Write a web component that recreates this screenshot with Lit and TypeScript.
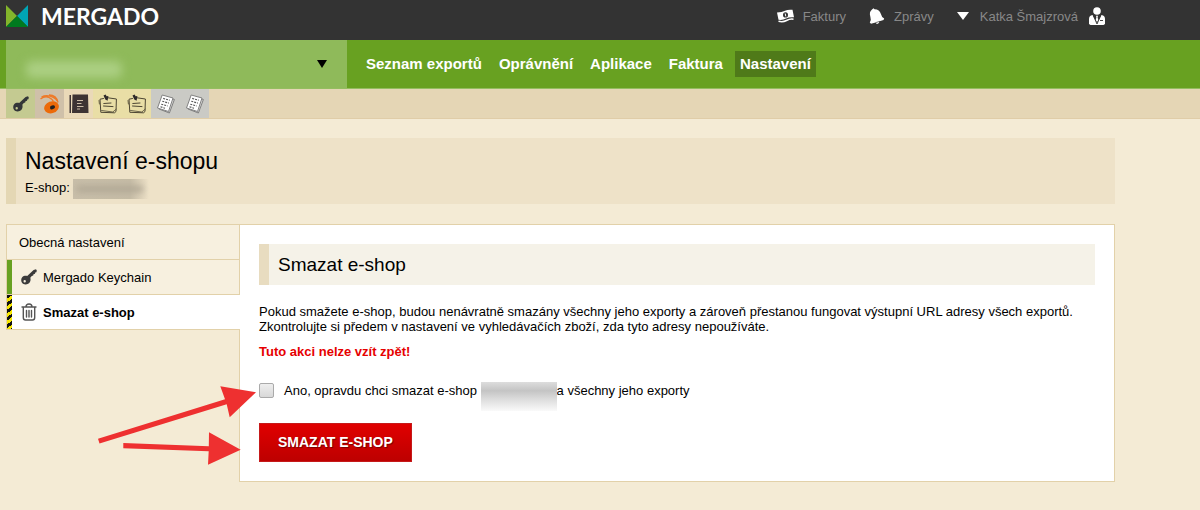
import { LitElement, html, css } from "lit";
import { customElement } from "lit/decorators.js";

const keyIcon = (color: string) => html`<svg class="icon" viewBox="0 0 16 16" width="16" height="16" aria-hidden="true">
  <path fill=${color} fill-rule="evenodd" d="M1.2 8.200C2.500 6.800 4.600 6.500 6.200 7L12.600 1 15 .3 15.800 1.400 15.400 3.200 14.200 3.500 14 4.800 12.500 5.200 12.200 6.600 10.800 7 9.300 8.800C10 11 9.300 13.400 7.200 14.700 5 16 2.200 15.600 1 13.800-.2 12 0 9.600 1.200 8.200zM2.500 12.300a1.200 1.200 0 1 0 2.400 0a1.200 1.200 0 1 0-2.400 0z"/>
</svg>`;

const noteIcon = html`<svg class="icon" viewBox="0 0 20 20" width="20" height="20" aria-hidden="true">
  <g fill="none" stroke="#4d4633" stroke-width="1" stroke-linecap="round" stroke-linejoin="round">
    <path d="M5.500 4.500 2 5.200 2.800 18.300 16.500 18.800 18 17.500 18.400 5 10 3.800"/>
    <path d="M3.600 16.500 14.800 18 18.200 15.200M1 6.500 1.400 10" stroke-width=".8"/>
    <path d="M5.800 9.500 13 9M5.500 12 15 12.600"/>
  </g>
  <path fill="#2e2a2a" d="M5.500 1.500 7.600.6 8.600 2.200 10.400 2 9.600 6.800 7.300 5.600z"/>
</svg>`;

const sheetsIcon = html`<svg class="icon" viewBox="0 0 20 20" width="20" height="20" aria-hidden="true">
  <path fill="#d9d9d7" stroke="#777" stroke-width=".9" d="M8 2.500 18.400 5.500 13.400 19 3 15z"/>
  <path fill="#fff" stroke="#777" stroke-width=".9" d="M6.200 1 17 4 12.500 17.500 1.500 14z"/>
  <path fill="none" stroke="#555" stroke-width="1.100" stroke-dasharray="2 1" d="M7.200 4.400 13.800 6.300M6.300 7.300 12.800 9.100M5.300 10.200 11.600 12M4.500 12.800 9 14.200"/>
</svg>`;

@customElement("app-root")
export class AppRoot extends LitElement {
  static styles = css`
    :host {
      display: block;
      min-height: 100vh;
      background: #f4ebd5;
      color: #000;
      font: 13px/15px "Liberation Sans", Arial, sans-serif;
    }
    * { box-sizing: border-box; }
    h1, h2, p { margin: 0; font-weight: normal; }
    a { color: inherit; text-decoration: none; }
    .icon { display: block; flex: none; }
    .wrap { max-width: 1115px; padding-left: 6px; display: flex; }

    .top { background: #333; }
    .top .wrap { height: 40px; justify-content: space-between; padding-bottom: 8px; align-items: center; }
    .brand { display: flex; align-items: center; gap: 13px; color: #fff; font: 700 23px/24px Lato, sans-serif; }
    .account { display: flex; align-items: center; gap: 23px; padding-right: 10px; color: #888; }
    .account a { display: flex; align-items: center; gap: 9px; }
    .account .user { gap: 11px; }

    .green { background: #68a121; border-bottom: 1px solid #94bd60; }
    .shop { position: relative; flex: 0 1 341px; background: #8fba5a; }
    .shop select { appearance: none; width: 100%; height: 48px; border: 0; padding: 0 40px 0 20px; background: transparent; font: inherit; display: block; }
    .shop svg { position: absolute; right: 20px; top: 20px; pointer-events: none; }
    .shop .smudge { position: absolute; left: 20px; top: 21px; width: 96px; height: 17px; border-radius: 6px; background: #abcf82; filter: blur(5px); pointer-events: none; }
    nav { display: flex; align-items: center; gap: 7px; padding-left: 14px; color: #fff; font: bold 15px/18px "Liberation Sans", Arial, sans-serif; }
    nav a { padding: 4px 5px; }
    nav .on { background: #4f7a19; }

    .tools { background: #e5d6b5; border-bottom: 1px solid #e0cda8; }
    .tools a { width: 29px; height: 29px; display: flex; align-items: center; justify-content: center; }
    .c-key { background: #c4ca91; }
    .c-bug { background: #cfc0a9; }
    .c-book { background: #ead9b8; }
    .c-note { background: #e9dea6; }
    .c-sheet { background: #cacac5; }

    main { max-width: 1115px; padding: 19px 0 27px 6px; position: relative; }
    .title { background: #eee2c8; border-left: 10px solid #e4d7b4; padding: 9px; margin-bottom: 20px; }
    h1 { font-size: 23px; line-height: 28px; }
    .title p { display: flex; gap: 3px; padding-top: 5px; }
    .hidden-name { position: relative; display: inline-block; width: 76px; height: 15px; vertical-align: top; }
    .hidden-name::before { content: ""; position: absolute; inset: -1px 0 -13px; background: linear-gradient(#ddd, #c4c4c4 30%, #ddd 60%, #fafafa); }
    .title .hidden-name::before { inset: -1px 0 -4px; background: linear-gradient(90deg, #c8bea9, #c5bba5 75%, #eee2c8); }
    .title .hidden-name::after { content: ""; position: absolute; left: 4px; top: 6px; width: 66px; height: 6px; background: #b0a794; filter: blur(3px); }

    .cols { display: flex; align-items: flex-start; }
    .side { flex: 0 0 233px; border: solid #e2d1a9; border-width: 1px 0 0 1px; position: relative; z-index: 1; }
    .side a { display: flex; align-items: center; gap: 6px; height: 35px; padding-left: 12px; background: #f7f0df; border-bottom: 1px solid #e2d1a9; }
    .side .key, .side .bin { padding-left: 0; }
    .side .key::before, .side .bin::before { content: ""; align-self: stretch; width: 5px; margin-right: 3px; background: #68a121; }
    .side .bin { background: #fff; font-weight: bold; margin-right: -1px; }
    .side .bin::before { background: repeating-linear-gradient(145deg, #111 0 3px, #f5e600 3px 6px); }
    .panel { flex: 1; min-width: 0; background: #fff; border: 1px solid #e2d1a9; padding: 19px; }
    h2 { background: #f5f2e8; border-left: 10px solid #e8dcc0; padding: 9px; font-size: 19px; line-height: 23px; margin-bottom: 19px; }
    .warn { color: #e60000; font-weight: bold; padding: 10px 0 24px; }
    .confirm { display: flex; align-items: center; gap: 10px; margin-bottom: 25px; }
    .confirm input { appearance: none; flex: none; width: 15px; height: 15px; margin: 0; border: 1px solid #aaa; border-radius: 2px; background: linear-gradient(#eee, #d8d8d8); }
    .delete { display: block; border: 1px solid #c51a1a; padding: 10px 18px; color: #fff; background: linear-gradient(#e00000, #bd0000); font: bold 14px/17px "Liberation Sans", Arial, sans-serif; text-shadow: 1px 1px 1px #700; }
    .arrows { position: absolute; left: 90px; top: 261px; z-index: 2; pointer-events: none; }
  `;

  render() {
    return html`
      <header class="top">
        <div class="wrap">
          <a class="brand" href="#">
            <svg class="icon" viewBox="0 0 22 22" width="22" height="22" aria-hidden="true">
              <path fill="#83b52b" d="M0 0 11 11 0 22z"/><path fill="#00a5b5" d="M22 0 11 11 22 22z"/><path fill="#007a1f" d="M11 11 22 22H0z"/>
            </svg>
            MERGADO
          </a>
          <div class="account">
            <a href="#">
              <svg class="icon" viewBox="0 0 17 14" width="17" height="14" aria-hidden="true">
                <path fill="#fff" d="M0 3.500Q5 3.400 8 1.800T15.500.8L17 8.200Q12 7.800 9 9.600T1.500 10.800z"/>
                <path fill="none" stroke="#fff" stroke-width="1.500" d="M1.500 12.300Q6 13.400 9.500 11.500T16.500 10.200"/>
                <ellipse cx="8.500" cy="5.900" rx="2.500" ry="2.700" fill="#333"/><path stroke="#fff" d="M8.200 4.500 8.800 7.400"/>
              </svg>
              Faktury
            </a>
            <a href="#">
              <svg class="icon" viewBox="0 0 16 17" width="16" height="17" aria-hidden="true">
                <path fill="#fff" d="M3 1.500 4.500.2 5.500 1.200C9 1.200 11 3 11.900 6Q12.500 9 15.200 10.500L14.500 12 10.500 13.300Q10.300 16 8.200 16 7 15.800 6.600 14.500L2 15.800.8 14.600Q2.500 12 1.400 9C.4 5.500.8 3.300 3 1.500z"/>
                <path stroke="#333" stroke-width=".7" d="M6.500 14.700 11 13.300"/>
              </svg>
              Zprávy
            </a>
            <a class="user" href="#">
              <svg class="icon" viewBox="0 0 12 8" width="12" height="8" aria-hidden="true"><path fill="#fff" d="M0 0H12L6 8z"/></svg>
              Katka Šmajzrová
              <svg class="icon" viewBox="0 0 16 18" width="16" height="18" aria-hidden="true">
                <circle cx="8" cy="4" r="3.800" fill="#fff"/>
                <path fill="#fff" d="M3.500 8 8 16 12.500 8Q16 8.500 16 12V17L14.500 18H1.500L0 17V12Q0 8.500 3.500 8zM7 8.800H9L8.600 10.500 9.300 13 8 15 6.700 13 7.400 10.500z"/>
                <path stroke="#333" d="M4.500 9 8 17 11.500 9M11 13.500H14" fill="none" stroke-width=".9"/>
              </svg>
            </a>
          </div>
        </div>
      </header>

      <div class="green">
        <div class="wrap">
          <div class="shop">
            <select aria-label="E-shop"><option></option></select>
            <span class="smudge"></span>
            <svg viewBox="0 0 10 8" width="10" height="8" aria-hidden="true"><path d="M0 0H10L5 8z"/></svg>
          </div>
          <nav>
            <a href="#">Seznam exportů</a>
            <a href="#">Oprávnění</a>
            <a href="#">Aplikace</a>
            <a href="#">Faktura</a>
            <a class="on" href="#" aria-current="page">Nastavení</a>
          </nav>
        </div>
      </div>

      <div class="tools">
        <div class="wrap">
          <a class="c-key" href="#">${keyIcon("#333638")}</a>
          <a class="c-bug" href="#">
            <svg class="icon" viewBox="0 0 20 20" width="20" height="20" aria-hidden="true">
              <ellipse cx="11.500" cy="13.300" rx="7.500" ry="5.900" transform="rotate(-20 11.500 13.300)" fill="#ec6a0a"/>
              <ellipse cx="12.500" cy="13.300" rx="2.600" ry="1.900" transform="rotate(-20 12.500 13.300)" fill="#222"/>
              <path fill="none" stroke="#ee7a28" stroke-width="1.300" d="M.5 5Q5 1.500 9 3.500T13.500 8M1.500 3Q6 .5 11 2.500T17 7M9 1Q16.500 1 18 8.500"/>
            </svg>
          </a>
          <a class="c-book" href="#">
            <svg class="icon" viewBox="0 0 20 20" width="20" height="20" aria-hidden="true">
              <path fill="#3d3333" d="M.5 1H2V19H.5zM3.500.5H19L19.500 19H3z"/>
              <path stroke="#cbbba6" d="M8 6.500H14M8 9.500H12.500M8 12.500H14.500M8 15H11"/>
            </svg>
          </a>
          <a class="c-note" href="#">${noteIcon}</a>
          <a class="c-note" href="#">${noteIcon}</a>
          <a class="c-sheet" href="#">${sheetsIcon}</a>
          <a class="c-sheet" href="#">${sheetsIcon}</a>
        </div>
      </div>

      <main>
        <header class="title">
          <h1>Nastavení e-shopu</h1>
          <p>E-shop: <span class="hidden-name"></span></p>
        </header>
        <div class="cols">
          <div class="side">
            <a href="#">Obecná nastavení</a>
            <a class="key" href="#">${keyIcon("#3b3b3b")}Mergado Keychain</a>
            <a class="bin" href="#" aria-current="page">
              <svg class="icon" viewBox="0 0 16 18" width="16" height="18" aria-hidden="true">
                <path fill="none" stroke="#555" stroke-width="1.400" stroke-linejoin="round" stroke-linecap="round" d="M1 4H15M5 3.800Q5 1 8 1T11 3.800M2.300 4.500V14.500Q2.300 17 4.500 17H11.500Q13.700 17 13.700 14.500V4.500M5.500 7.500V14M8 7.500V14M10.500 7.500V14"/>
              </svg>
              Smazat e-shop
            </a>
          </div>
          <section class="panel">
            <h2>Smazat e-shop</h2>
            <p>Pokud smažete e-shop, budou nenávratně smazány všechny jeho exporty a zároveň přestanou fungovat výstupní URL adresy všech exportů. Zkontrolujte si předem v nastavení ve vyhledávačích zboží, zda tyto adresy nepoužíváte.</p>
            <p class="warn">Tuto akci nelze vzít zpět!</p>
            <div class="confirm">
              <input type="checkbox" id="agree" />
              <label for="agree">Ano, opravdu chci smazat e-shop <span class="hidden-name"></span>a všechny jeho exporty</label>
            </div>
            <button class="delete" type="button">SMAZAT E-SHOP</button>
          </section>
        </div>
        <svg class="arrows" viewBox="90 380 160 90" width="160" height="90" overflow="visible" aria-hidden="true">
          <path fill="#ee3030" d="M98 438.700 225 399.300 220.300 386.300 256 392.300 229.700 417.300 226.700 404.300 99.500 443.500zM123.300 443 208.800 446.300 209 432.300 240.700 449.700 208 464.700 208.700 451.300 123.300 448.300z"/>
        </svg>
      </main>
    `;
  }
}
